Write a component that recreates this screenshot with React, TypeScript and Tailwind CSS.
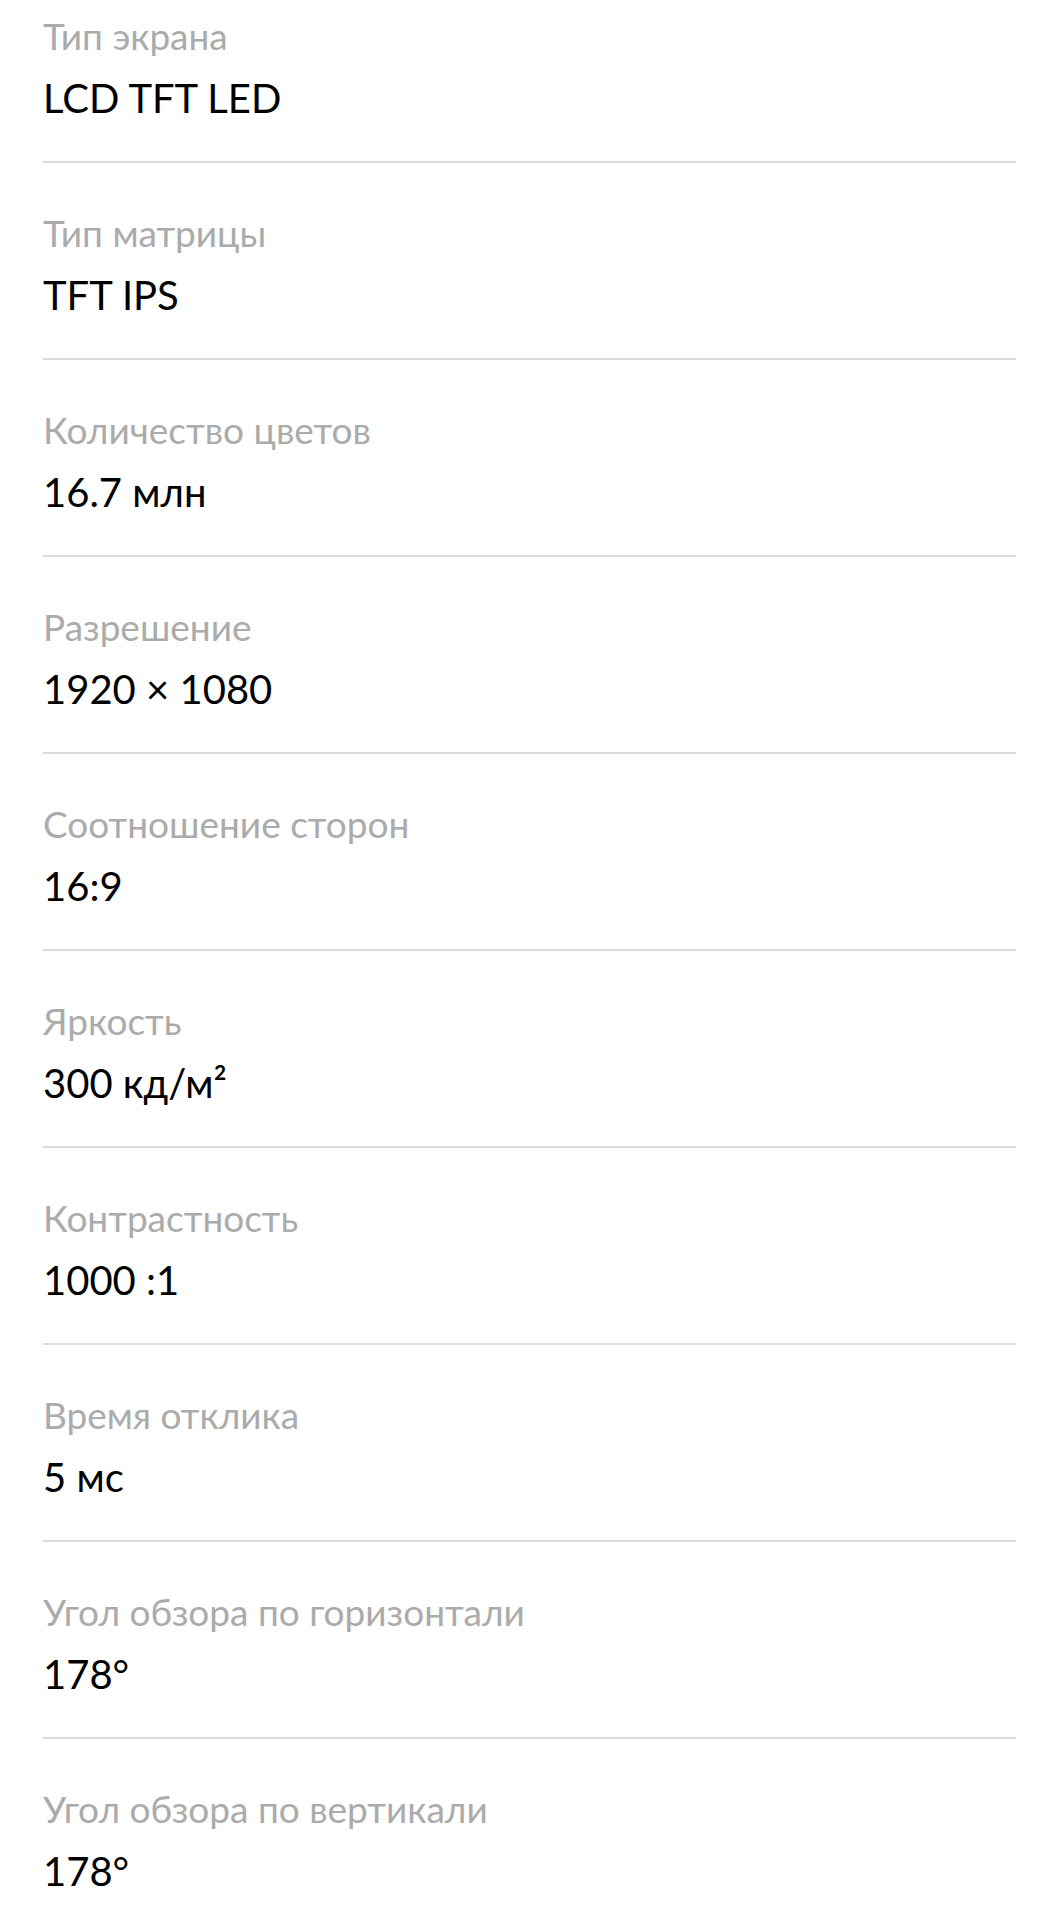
import React from "react";

interface Spec {
  label: string;
  value: string;
}

const specs: Spec[] = [
  { label: "Тип экрана", value: "LCD TFT LED" },
  { label: "Тип матрицы", value: "TFT IPS" },
  { label: "Количество цветов", value: "16.7 млн" },
  { label: "Разрешение", value: "1920 × 1080" },
  { label: "Соотношение сторон", value: "16:9" },
  { label: "Яркость", value: "300 кд/м²" },
  { label: "Контрастность", value: "1000 :1" },
  { label: "Время отклика", value: "5 мс" },
  { label: "Угол обзора по горизонтали", value: "178°" },
  { label: "Угол обзора по вертикали", value: "178°" },
];

const SpecRow: React.FC<{ spec: Spec; first: boolean }> = ({ spec, first }) => (
  <div
    className={`flex flex-col gap-[16px] border-b-2 border-[#dcdcdc] pb-[39px] ${
      first ? "pt-[14px]" : "pt-[48px]"
    }`}
  >
    <div className="text-[37px] leading-[44px] text-[#ababab]">{spec.label}</div>
    <div className="text-[40px] leading-[48px] text-black">{spec.value}</div>
  </div>
);

export default function App() {
  return (
    <div className="min-h-screen bg-white px-[43px] font-['Lato',sans-serif] overflow-hidden">
      {specs.map((s, i) => (
        <SpecRow key={s.label} spec={s} first={i === 0} />
      ))}
    </div>
  );
}
